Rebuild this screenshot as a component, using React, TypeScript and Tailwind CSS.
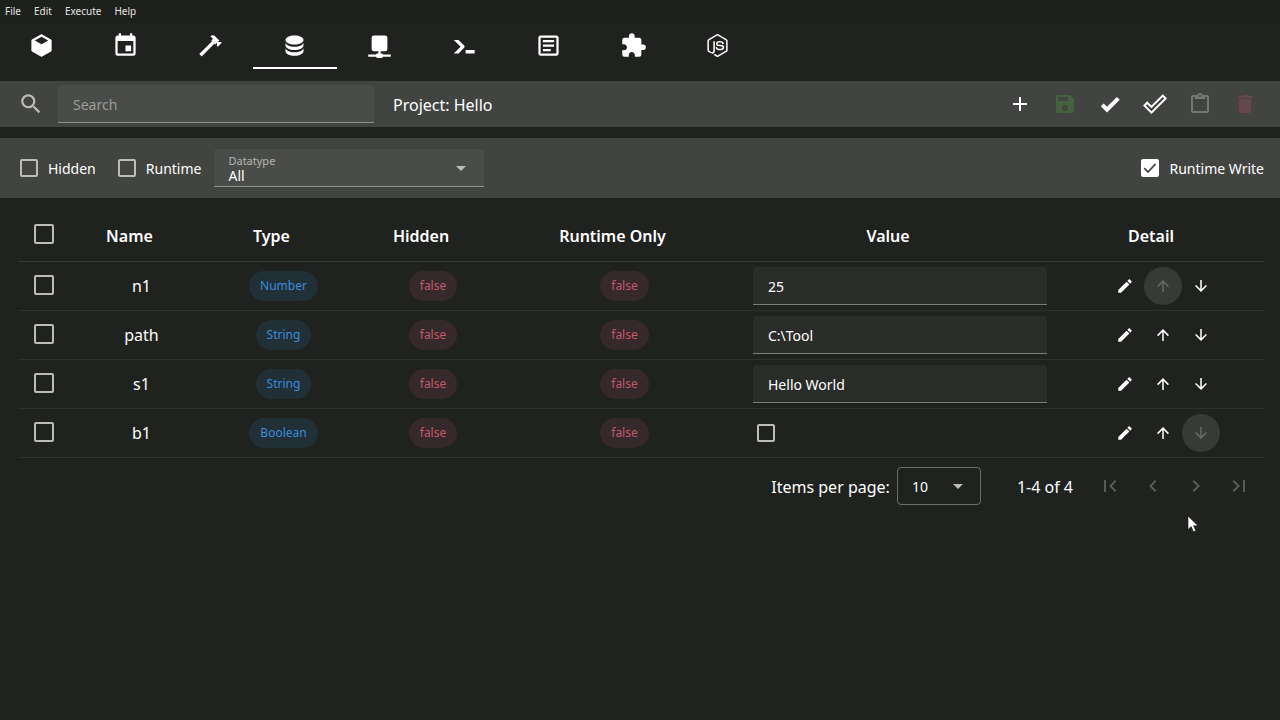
import { useState } from "react";
import type { ReactNode } from "react";

const icons = {
  cube: "M21,16.5C21,16.88 20.79,17.21 20.47,17.38L12.57,21.82C12.41,21.94 12.21,22 12,22C11.79,22 11.59,21.94 11.43,21.82L3.53,17.38C3.21,17.21 3,16.88 3,16.5V7.5C3,7.12 3.21,6.79 3.53,6.62L11.43,2.18C11.59,2.06 11.79,2 12,2C12.21,2 12.41,2.06 12.57,2.18L20.47,6.62C20.79,6.79 21,7.12 21,7.5V16.5M12,4.15L6.04,7.5L12,10.85L17.96,7.5L12,4.15Z",
  calendar:
    "M19,19H5V8H19M16,1V3H8V1H6V3H5C3.89,3 3,3.89 3,5V19A2,2 0 0,0 5,21H19A2,2 0 0,0 21,19V5C21,3.89 20.1,3 19,3H18V1M17,12H12V17H17V12Z",
  hammer:
    "M2 19.63L13.43 8.2L12.72 7.5L14.14 6.07L12 3.89C13.2 2.7 15.09 2.7 16.27 3.89L19.87 7.5L18.45 8.91H21.29L22 9.62L18.45 13.21L17.74 12.5V9.62L16.27 11.04L15.56 10.33L4.13 21.76L2 19.63Z",
  database:
    "M12,3C7.58,3 4,4.79 4,7C4,9.21 7.58,11 12,11C16.42,11 20,9.21 20,7C20,4.79 16.42,3 12,3M4,9V12C4,14.21 7.58,16 12,16C16.42,16 20,14.21 20,12V9C20,11.21 16.42,13 12,13C7.58,13 4,11.21 4,9M4,14V17C4,19.21 7.58,21 12,21C16.42,21 20,19.21 20,17V14C20,16.21 16.42,18 12,18C7.58,18 4,16.21 4,14Z",
  network:
    "M17,3A2,2 0 0,1 19,5V15A2,2 0 0,1 17,17H13V19H14A1,1 0 0,1 15,20H22V22H15A1,1 0 0,1 14,23H10A1,1 0 0,1 9,22H2V20H9A1,1 0 0,1 10,19H11V17H7C5.89,17 5,16.1 5,15V5A2,2 0 0,1 7,3H17Z",
  console:
    "M13,19V16H21V19H13M8.5,13L2.47,7H6.71L11.67,11.95C12.25,12.54 12.25,13.5 11.67,14.07L6.74,19H2.5L8.5,13Z",
  textBox:
    "M5,3C3.89,3 3,3.89 3,5V19C3,20.11 3.89,21 5,21H19C20.11,21 21,20.11 21,19V5C21,3.89 20.11,3 19,3H5M5,5H19V19H5V5M7,7V9H17V7H7M7,11V13H17V11H7M7,15V17H14V15H7Z",
  puzzle:
    "M20.5,11H19V7C19,5.89 18.1,5 17,5H13V3.5A2.5,2.5 0 0,0 10.5,1A2.5,2.5 0 0,0 8,3.5V5H4A2,2 0 0,0 2,7V10.8H3.5C5,10.8 6.2,12 6.2,13.5C6.2,15 5,16.2 3.5,16.2H2V20A2,2 0 0,0 4,22H7.8V20.5C7.8,19 9,17.8 10.5,17.8C12,17.8 13.2,19 13.2,20.5V22H17A2,2 0 0,0 19,20V16H20.5A2.5,2.5 0 0,0 23,13.5A2.5,2.5 0 0,0 20.5,11Z",
  nodejs:
    "M12,1.85C11.73,1.85 11.45,1.92 11.22,2.05L3.78,6.35C3.3,6.63 3,7.15 3,7.71V16.29C3,16.85 3.3,17.37 3.78,17.65L5.73,18.77C6.68,19.23 7,19.24 7.44,19.24C8.84,19.24 9.65,18.39 9.65,16.91V8.44C9.65,8.32 9.55,8.22 9.43,8.22H8.5C8.37,8.22 8.27,8.32 8.27,8.44V16.91C8.27,17.57 7.59,18.22 6.5,17.67L4.45,16.5C4.38,16.45 4.34,16.37 4.34,16.29V7.71C4.34,7.62 4.38,7.54 4.45,7.5L11.89,3.21C11.95,3.17 12.05,3.17 12.11,3.21L19.55,7.5C19.62,7.54 19.66,7.62 19.66,7.71V16.29C19.66,16.37 19.62,16.45 19.55,16.5L12.11,20.79C12.05,20.83 11.95,20.83 11.88,20.79L10,19.65C9.92,19.62 9.84,19.61 9.79,19.64C9.26,19.94 9.16,20 8.67,20.15C8.55,20.19 8.36,20.26 8.74,20.47L11.22,21.94C11.46,22.08 11.72,22.15 12,22.15C12.28,22.15 12.54,22.08 12.78,21.94L20.22,17.65C20.7,17.37 21,16.85 21,16.29V7.71C21,7.15 20.7,6.63 20.22,6.35L12.78,2.05C12.55,1.92 12.28,1.85 12,1.85M14,8C11.88,8 10.61,8.89 10.61,10.39C10.61,12 11.87,12.47 13.91,12.67C16.34,12.91 16.53,13.27 16.53,13.75C16.53,14.58 15.86,14.93 14.3,14.93C12.32,14.93 11.9,14.44 11.75,13.46C11.73,13.36 11.64,13.28 11.53,13.28H10.57C10.45,13.28 10.36,13.37 10.36,13.5C10.36,14.74 11.04,16.24 14.3,16.24C16.65,16.24 18,15.31 18,13.69C18,12.08 16.92,11.66 14.63,11.35C12.32,11.05 12.09,10.89 12.09,10.35C12.09,9.9 12.29,9.3 14,9.3C15.5,9.3 16.09,9.63 16.32,10.66C16.34,10.76 16.43,10.83 16.53,10.83H17.5C17.55,10.83 17.61,10.81 17.65,10.76C17.69,10.72 17.72,10.66 17.7,10.6C17.56,8.82 16.38,8 14,8Z",
  magnify:
    "M9.5,3A6.5,6.5 0 0,1 16,9.5C16,11.11 15.41,12.59 14.44,13.73L14.71,14H15.5L20.5,19L19,20.5L14,15.5V14.71L13.73,14.44C12.59,15.41 11.11,16 9.5,16A6.5,6.5 0 0,1 3,9.5A6.5,6.5 0 0,1 9.5,3M9.5,5C7,5 5,7 5,9.5C5,12 7,14 9.5,14C12,14 14,12 14,9.5C14,7 12,5 9.5,5Z",
  plus: "M19,13H13V19H11V13H5V11H11V5H13V11H19V13Z",
  save: "M15,9H5V5H15M12,19A3,3 0 0,1 9,16A3,3 0 0,1 12,13A3,3 0 0,1 15,16A3,3 0 0,1 12,19M17,3H5C3.89,3 3,3.9 3,5V19A2,2 0 0,0 5,21H19A2,2 0 0,0 21,19V7L17,3Z",
  checkBold: "M9,20.42L2.79,14.21L5.62,11.38L9,14.77L18.88,4.88L21.71,7.71L9,20.42Z",
  checkOutline:
    "M19.78,2.2L24,6.42L8.44,22L0,13.55L4.22,9.33L8.44,13.55L19.78,2.2M19.78,5L8.44,16.36L4.22,12.19L2.81,13.55L8.44,19.17L21.19,6.42L19.78,5Z",
  clipboard:
    "M19,3H14.82C14.4,1.84 13.3,1 12,1C10.7,1 9.6,1.84 9.18,3H5A2,2 0 0,0 3,5V19A2,2 0 0,0 5,21H19A2,2 0 0,0 21,19V5A2,2 0 0,0 19,3M12,3A1,1 0 0,1 13,4A1,1 0 0,1 12,5A1,1 0 0,1 11,4A1,1 0 0,1 12,3M7,7H17V5H19V19H5V5H7V7Z",
  trash: "M19,4H15.5L14.5,3H9.5L8.5,4H5V6H19M6,19A2,2 0 0,0 8,21H16A2,2 0 0,0 18,19V7H6V19Z",
  pencil:
    "M20.71,7.04C21.1,6.65 21.1,6 20.71,5.63L18.37,3.29C18,2.9 17.35,2.9 16.96,3.29L15.12,5.12L18.87,8.87M3,17.25V21H6.75L17.81,9.93L14.06,6.18L3,17.25Z",
  arrowUp: "M13,20H11V8L5.5,13.5L4.08,12.08L12,4.16L19.92,12.08L18.5,13.5L13,8V20Z",
  arrowDown: "M11,4H13V16L18.5,10.5L19.92,11.92L12,19.84L4.08,11.92L5.5,10.5L11,16V4Z",
  pageFirst: "M18.41,16.59L13.82,12L18.41,7.41L17,6L11,12L17,18L18.41,16.59M6,6H8V18H6V6Z",
  chevronLeft: "M15.41,16.58L10.83,12L15.41,7.41L14,6L8,12L14,18L15.41,16.58Z",
  chevronRight: "M8.59,16.58L13.17,12L8.59,7.41L10,6L16,12L10,18L8.59,16.58Z",
  pageLast: "M5.59,7.41L10.18,12L5.59,16.59L7,18L13,12L7,6L5.59,7.41M16,6H18V18H16V6Z",
  menuDown: "M7,10L12,15L17,10H7Z",
};

type IconName = keyof typeof icons;

function Icon({ name, className }: { name: IconName; className: string }) {
  return (
    <svg viewBox="0 0 24 24" fill="currentColor" aria-hidden="true" className={className}>
      <path d={icons[name]} />
    </svg>
  );
}

const smallBox =
  "size-[18px] shrink-0 appearance-none rounded-[2px] border-2 border-[#bcbdbb] checked:border-white checked:bg-white";
const largeBox =
  "block size-5 shrink-0 appearance-none rounded-[2px] border-2 border-[#bcbdbb] checked:border-white checked:bg-white";

function Tick() {
  return (
    <svg
      viewBox="0 0 18 18"
      fill="none"
      stroke="#424441"
      strokeWidth="1.7"
      aria-hidden="true"
      className="pointer-events-none col-start-1 row-start-1 hidden size-[18px] peer-checked:block"
    >
      <path d="M3.2 9.2L7 13L14.6 4.8" />
    </svg>
  );
}

function LabeledBox({ label, initial = false }: { label: string; initial?: boolean }) {
  const [checked, setChecked] = useState(initial);
  return (
    <label className="flex items-center gap-[10px] text-sm">
      <span className="grid">
        <input
          type="checkbox"
          checked={checked}
          onChange={(e) => setChecked(e.target.checked)}
          className={`peer col-start-1 row-start-1 ${smallBox}`}
        />
        <Tick />
      </span>
      <span className="pt-[2px]">{label}</span>
    </label>
  );
}

const menus = ["File", "Edit", "Execute", "Help"];

const tabs: { name: string; icon: IconName }[] = [
  { name: "Packages", icon: "cube" },
  { name: "Events", icon: "calendar" },
  { name: "Actions", icon: "hammer" },
  { name: "Variables", icon: "database" },
  { name: "Network", icon: "network" },
  { name: "Console", icon: "console" },
  { name: "Logs", icon: "textBox" },
  { name: "Plugins", icon: "puzzle" },
  { name: "Node.js", icon: "nodejs" },
];

const tools: { name: string; icon: IconName; className: string }[] = [
  { name: "Add", icon: "plus", className: "text-white" },
  { name: "Save", icon: "save", className: "text-[#45633f]" },
  { name: "Apply", icon: "checkBold", className: "text-white" },
  { name: "Select all", icon: "checkOutline", className: "text-white" },
  { name: "Paste", icon: "clipboard", className: "text-[#757774]" },
  { name: "Delete", icon: "trash", className: "text-[#66474e]" },
];

const rows = [
  { name: "n1", type: "Number", value: "25" },
  { name: "path", type: "String", value: "C:\\Tool" },
  { name: "s1", type: "String", value: "Hello World" },
  { name: "b1", type: "Boolean", value: null },
];

const pages: { name: string; icon: IconName }[] = [
  { name: "First page", icon: "pageFirst" },
  { name: "Previous page", icon: "chevronLeft" },
  { name: "Next page", icon: "chevronRight" },
  { name: "Last page", icon: "pageLast" },
];

function Chip({ className, children }: { className: string; children: ReactNode }) {
  return (
    <span className={`inline-flex h-[30px] items-center rounded-full px-[11px] pt-px align-middle text-xs ${className}`}>
      {children}
    </span>
  );
}

function RoundButton({ name, icon, disabled = false }: { name: string; icon: IconName; disabled?: boolean }) {
  return (
    <button
      type="button"
      aria-label={name}
      disabled={disabled}
      className="flex size-[38px] items-center justify-center rounded-full text-white disabled:bg-[#383a38] disabled:text-[#686a67]"
    >
      <Icon name={icon} className="size-[18px]" />
    </button>
  );
}

export default function App() {
  return (
    <div className="relative min-h-screen bg-[#20221f] font-['Noto_Sans',sans-serif] text-white">
      <nav className="flex h-[23px] items-center gap-[13px] bg-[#1e201d] px-[5px] text-[10px] text-[#e4e5e3]">
        {menus.map((m) => (
          <button key={m} type="button">
            {m}
          </button>
        ))}
      </nav>

      <div role="tablist" className="-ml-px grid h-[46px] w-[761px] max-w-full grid-cols-9">
        {tabs.map((t) => (
          <button
            key={t.name}
            type="button"
            role="tab"
            aria-label={t.name}
            aria-selected={t.icon === "database"}
            className="flex items-center justify-center border-b-2 border-transparent aria-selected:border-white"
          >
            <Icon name={t.icon} className="size-[27px]" />
          </button>
        ))}
      </div>

      <header className="mt-3 flex h-[46px] items-center bg-[#424441] pr-4 pl-[18px]">
        <label htmlFor="search" aria-label="Search" className="text-[#bcbdbb]">
          <Icon name="magnify" className="size-[26px]" />
        </label>
        <input
          id="search"
          type="text"
          placeholder="Search"
          className="ml-[14px] h-[38px] w-[316px] rounded-t border-b border-[#8f918e] bg-[#4a4c49] px-[15px] pt-[2px] text-sm outline-none placeholder:text-[#9b9d9a]"
        />
        <h1 className="ml-[19px] pt-[2px] text-base">Project: Hello</h1>
        <div className="ml-auto flex gap-[7px]">
          {tools.map((t) => (
            <button
              key={t.name}
              type="button"
              aria-label={t.name}
              className={`flex size-[38px] items-center justify-center ${t.className}`}
            >
              <Icon name={t.icon} className="size-6" />
            </button>
          ))}
        </div>
      </header>

      <section className="mt-[11px] flex h-[60px] items-center bg-[#424441] pr-4 pl-5">
        <div className="flex items-center gap-[22px]">
          <LabeledBox label="Hidden" />
          <LabeledBox label="Runtime" />
        </div>
        <div className="relative ml-[13px] h-[38px] w-[270px] rounded-t border-b border-[#8f918e] bg-[#4a4c49]">
          <label htmlFor="datatype" className="absolute top-1 left-[14px] text-[11px] leading-4 text-[#b5b6b4]">
            Datatype
          </label>
          <select id="datatype" className="h-full w-full appearance-none px-[14px] pt-[17px] text-sm leading-5 outline-none">
            <option>All</option>
          </select>
          <Icon name="menuDown" className="pointer-events-none absolute top-[7px] right-[11px] size-6 text-[#bcbdbb]" />
        </div>
        <div className="ml-auto">
          <LabeledBox label="Runtime Write" initial />
        </div>
      </section>

      <main className="pt-[11px] pr-4 pl-[18px]">
        <table className="w-full table-fixed border-collapse text-center text-base">
          <colgroup>
            <col className="w-[53px]" />
            <col className="w-[141px]" />
            <col className="w-[143px]" />
            <col className="w-[156px]" />
            <col className="w-[227px]" />
            <col />
            <col className="w-[202px]" />
          </colgroup>
          <thead>
            <tr className="h-[52px] border-b border-[#373936]">
              <th className="pb-[2px] pl-4">
                <input type="checkbox" aria-label="Select all rows" className={largeBox} />
              </th>
              {["Name", "Type", "Hidden", "Runtime Only", "Value", "Detail"].map((h) => (
                <th key={h} scope="col" className="pt-[2px] pr-6 font-semibold">
                  {h}
                </th>
              ))}
            </tr>
          </thead>
          <tbody>
            {rows.map((r, i) => (
              <tr key={r.name} className="h-[49px] border-b border-[#2f312e]">
                <td className="pb-[2px] pl-4">
                  <input type="checkbox" aria-label={`Select ${r.name}`} className={largeBox} />
                </td>
                <td className="pt-px">{r.name}</td>
                <td>
                  <Chip className="bg-[#212f37] text-[#3b8cdc]">{r.type}</Chip>
                </td>
                <td>
                  <Chip className="bg-[#35292c] text-[#c3586f]">false</Chip>
                </td>
                <td>
                  <Chip className="bg-[#35292c] text-[#c3586f]">false</Chip>
                </td>
                <td className="px-[15px]">
                  {r.value === null ? (
                    <input type="checkbox" aria-label={`Value of ${r.name}`} className={`ml-1 block ${smallBox}`} />
                  ) : (
                    <input
                      type="text"
                      aria-label={`Value of ${r.name}`}
                      defaultValue={r.value}
                      className="block h-[38px] w-full rounded-t border-b border-[#7c7e7b] bg-[#2a2c2a] px-[15px] pt-[2px] text-sm outline-none"
                    />
                  )}
                </td>
                <td>
                  <div className="flex justify-center">
                    <RoundButton name={`Edit ${r.name}`} icon="pencil" />
                    <RoundButton name={`Move ${r.name} up`} icon="arrowUp" disabled={i === 0} />
                    <RoundButton name={`Move ${r.name} down`} icon="arrowDown" disabled={i === rows.length - 1} />
                  </div>
                </td>
              </tr>
            ))}
          </tbody>
        </table>

        <footer className="flex items-center justify-end pt-[9px] pr-[6px] text-base">
          <label htmlFor="per-page" className="pt-[2px]">
            Items per page:
          </label>
          <div className="relative ml-[7px] h-[38px] w-[84px]">
            <select
              id="per-page"
              className="h-full w-full appearance-none rounded border border-[#6c6e6b] px-[14px] pt-[2px] text-sm outline-none"
            >
              <option>10</option>
            </select>
            <Icon
              name="menuDown"
              className="pointer-events-none absolute top-[7px] right-[11px] size-6 text-[#bcbdbb]"
            />
          </div>
          <span className="mr-[18px] ml-9 pt-[2px]">1-4 of 4</span>
          <div className="flex gap-[5px]">
            {pages.map((p) => (
              <button
                key={p.name}
                type="button"
                aria-label={p.name}
                disabled
                className="flex size-[38px] items-center justify-center text-[#5a5c59]"
              >
                <Icon name={p.icon} className="size-6" />
              </button>
            ))}
          </div>
        </footer>
      </main>

      <svg viewBox="0 0 12 18" aria-hidden="true" className="pointer-events-none absolute top-[515px] left-[1187px] h-[18px] w-3">
        <path
          d="M1 1V14.6L4.2 11.6L6.4 16.8L8.8 15.8L6.6 10.8H11Z"
          fill="#ffffff"
          stroke="#111211"
          strokeWidth="0.6"
        />
      </svg>
    </div>
  );
}
